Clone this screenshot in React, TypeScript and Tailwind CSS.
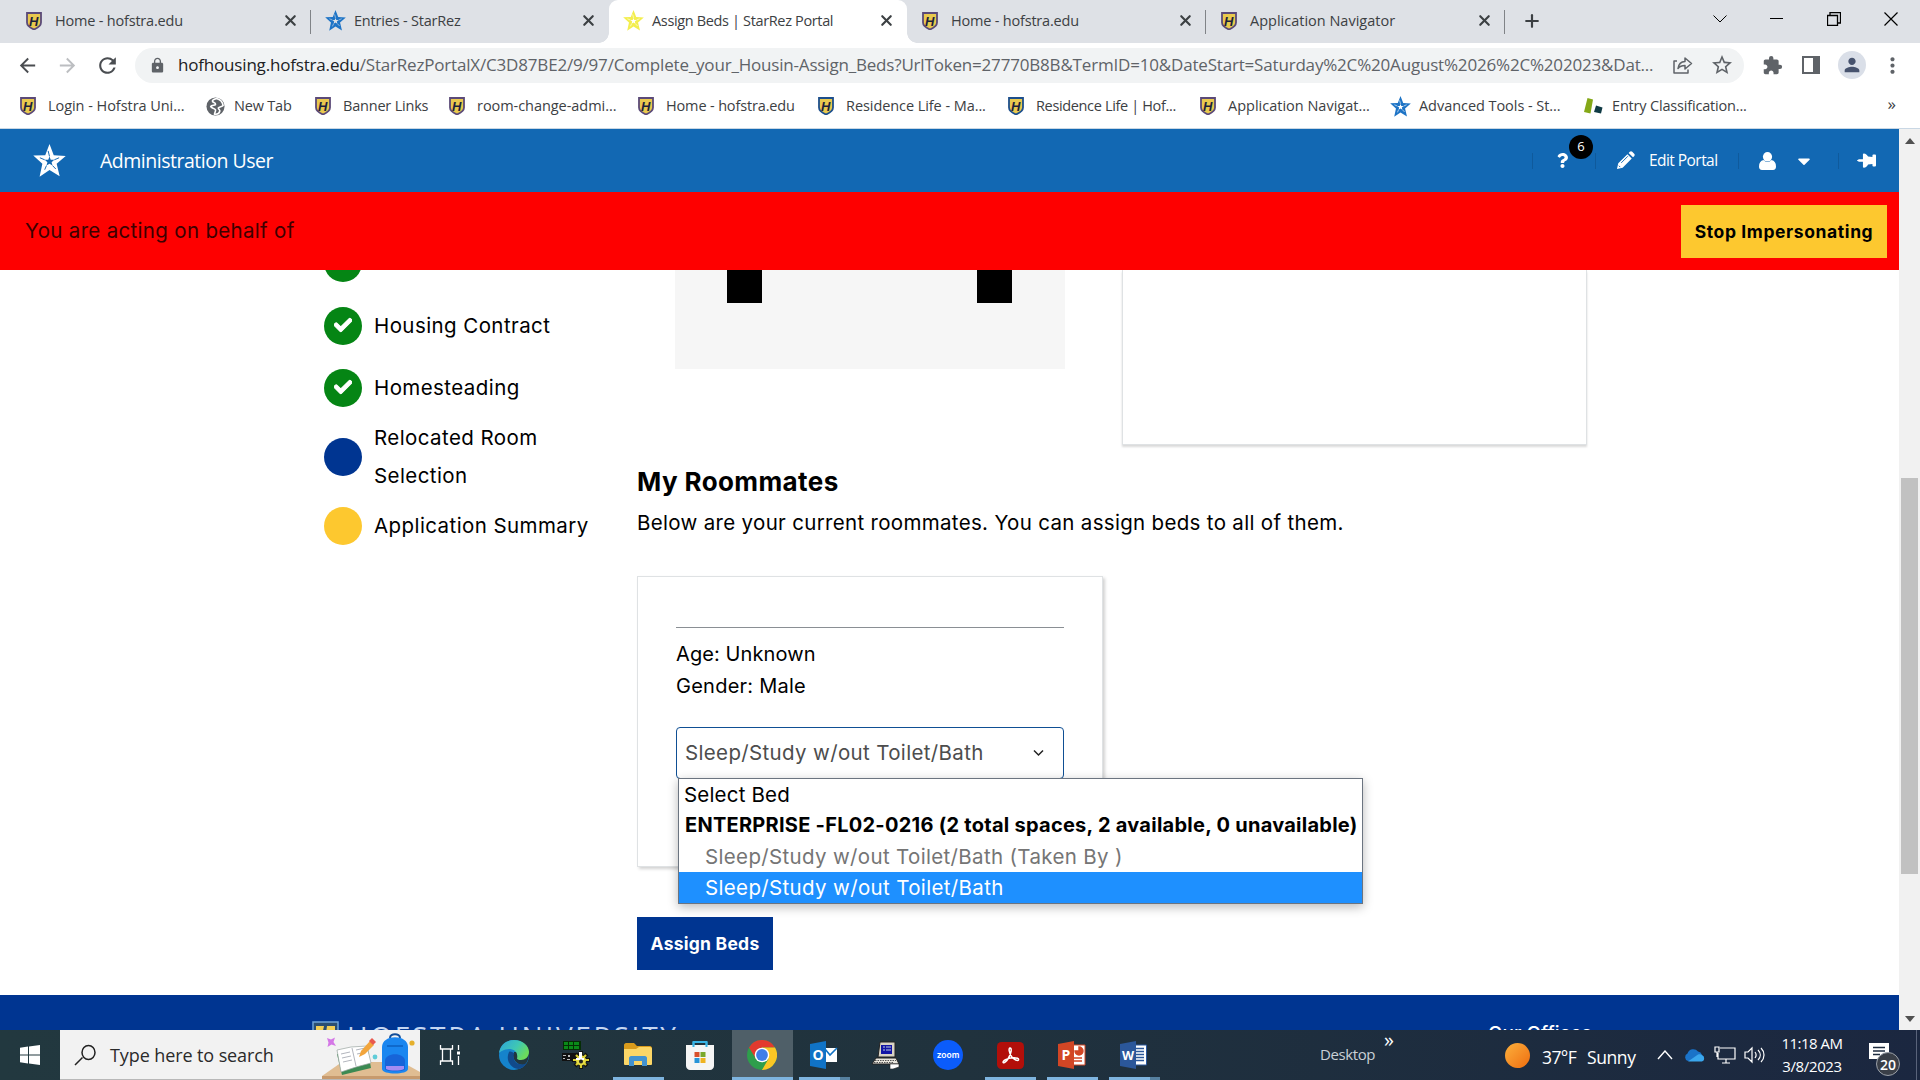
import React from 'react';
import { clsx } from 'clsx';
import { FaCaretDown, FaCheck, FaQuestion, FaThumbtack } from 'react-icons/fa';
import { MdArrowBack, MdArrowForward, MdExtension, MdLock, MdMoreVert, MdPerson, MdRefresh, MdStarOutline } from 'react-icons/md';
import { X, Plus } from 'lucide-react';

interface IconProps {
  className?: string;
}

/* ---------- Logos ---------- */

const Shield: React.FC<IconProps & { edge?: string }> = ({ className, edge = '#5b4a78' }) => (
  <svg viewBox="0 0 16 18" className={clsx('h-[18px] w-4 shrink-0', className)}>
    <path d="M1 1h14v9.500c0 3.500-3.500 5.500-7 7-3.500-1.500-7-3.500-7-7z" fill="#e9c94e" stroke={edge} strokeWidth="1.800" />
    <text x="7.800" y="13.500" textAnchor="middle" fontFamily="Liberation Sans" fontSize="13" fontWeight="700" fontStyle="italic" fill="#1d1f3c">H</text>
  </svg>
);

const StarLogo: React.FC<IconProps & { slit?: string }> = ({ className, slit = '#fff' }) => (
  <svg viewBox="0 0 24 24" className={clsx('shrink-0', className)}>
    <path
      fill="currentColor"
      fillRule="evenodd"
      d="M12 0l3.100 8.100 8.700.6-6.600 5.700 2.200 9.100-7.400-4.600-7.200 4.900 2-9.400L.2 8.400l8.700-.3zM12 9l-.9 2.400-2.600.1 2 1.700-.7 2.500 2.200-1.400 2.200 1.400-.7-2.500 2-1.700-2.600-.1z"
    />
    <path d="M12 9L11 5M15.500 11.500l3.500-1.500M14.200 15.700l2.400 2.500M9.800 15.700l-1.300 3M8.500 11.500L5 10" stroke={slit} strokeWidth=".7" fill="none" />
  </svg>
);

const Globe = () => (
  <svg viewBox="0 0 20 20" className="size-[19px]">
    <circle cx="10" cy="10" r="9.500" fill="#5f6368" />
    <path d="M11 1.500c-3 1-5 2-4 3.500 1.500 1 3.500 1 3 3-1 1-4 .5-5 2 .5 2 4 1.500 5 3.500.5 1.500-1 3-1 4.500 3 .5 5-1 5.500-3 .5-1.500-1.500-2-1.500-3.500 1-1.500 4-1 5-2.500C17.500 5 15 2.500 11 1.500z" fill="none" stroke="#fff" strokeWidth="1.700" />
  </svg>
);

const GreenBlocks = () => (
  <svg viewBox="0 0 19 18" className="h-[18px] w-[19px]">
    <path d="M3.500 1l5.500 1.500-2.500 14L0 15z" fill="#84a817" />
    <path d="M12 8.500l6.500 2-1.500 6-7-1.500z" fill="#0f3a44" />
  </svg>
);

/* ---------- Browser chrome ---------- */

interface TabProps {
  icon: React.ReactNode;
  title: string;
  width: string;
  text?: string;
  active?: boolean;
  divider?: boolean;
}

const Tab: React.FC<TabProps> = ({ icon, title, width, text, active, divider }) => (
  <div className={clsx('relative flex h-[43px] shrink-0 items-center pr-[12px] pb-[2px]', width, active && 'rounded-t-[9px] bg-white')}>
    {active && (
      <>
        <span className="absolute bottom-0 -left-2.5 size-2.5 bg-[radial-gradient(circle_at_0_0,#dee1e6_9.5px,#fff_10px)]" />
        <span className="absolute -right-2.5 bottom-0 size-2.5 bg-[radial-gradient(circle_at_100%_0,#dee1e6_9.5px,#fff_10px)]" />
      </>
    )}
    <span className="flex w-[29px] shrink-0 items-center">{icon}</span>
    <span className={clsx('flex-1 text-[14.5px] whitespace-nowrap text-[#3c4043]', text)}>{title}</span>
    <X className="size-[17px] text-[#3c4043]" strokeWidth={3} />
    {divider && <span className="absolute top-[10px] right-0 h-6 w-px bg-[#808387]" />}
  </div>
);

const TabStrip = () => (
  <div className="flex h-[43px] bg-[#dee1e6]">
    <Tab icon={<Shield />} title="Home - hofstra.edu" width="w-[311px] pl-[26px]" text="tracking-[-0.2px]" divider />
    <Tab icon={<StarLogo className="size-[21px] text-[#1e74c6]" slit="#dee1e6" />} title="Entries - StarRez" width="w-[298px] pl-[14px]" text="tracking-[-0.2px]" />
    <Tab icon={<StarLogo className="size-[21px] text-[#f3ee4e]" />} title="Assign Beds | StarRez Portal" width="w-[298px] pl-[14px]" text="tracking-[-0.35px]" active />
    <Tab icon={<Shield />} title="Home - hofstra.edu" width="w-[299px] pl-[15px]" text="tracking-[-0.2px]" divider />
    <Tab icon={<Shield />} title="Application Navigator" width="w-[299px] pl-[15px]" divider />
    <div className="flex w-[53px] items-center justify-center pb-[2px]">
      <Plus className="size-[20px] text-[#3c4043]" strokeWidth={2.6} />
    </div>
    <div className="ml-auto flex h-[37px] items-center pr-px text-black">
      <span className="flex w-[57px] justify-center">
        <svg viewBox="0 0 14 8" className="h-2 w-3.5"><path d="M.5.500l6.500 6.500 6.500-6.500" fill="none" stroke="currentColor" /></svg>
      </span>
      <span className="flex w-[57px] justify-center"><span className="h-px w-[13px] bg-black" /></span>
      <span className="flex w-[57px] justify-center">
        <svg viewBox="0 0 14 14" className="size-3.5"><path d="M.5 3.500h10v10h-10zM3 3V.500h10.500V11H11" fill="none" stroke="currentColor" strokeWidth="1.3" /></svg>
      </span>
      <span className="flex w-[57px] justify-center">
        <svg viewBox="0 0 14 14" className="size-3.5"><path d="M.5.500l13 13M13.500.500l-13 13" fill="none" stroke="currentColor" strokeWidth="1.2" /></svg>
      </span>
    </div>
  </div>
);

const AddressBar = () => (
  <div className="flex h-[43px] items-center bg-white pt-px text-[#5f6368]">
    <span className="flex w-12 justify-end pr-[9px]"><MdArrowBack className="size-[23px] text-[#4a4d51]" /></span>
    <span className="flex w-10 justify-end pr-[9px]"><MdArrowForward className="size-[23px] text-[#bcbec1]" /></span>
    <span className="flex w-[47px] pl-[7px]"><MdRefresh className="size-[25px] text-[#4a4d51]" /></span>
    <div className="flex h-[35px] w-[1609px] items-center rounded-full bg-[#f1f3f4] pr-[10px] pl-[14px]">
      <MdLock className="mr-[12px] size-[17px] shrink-0" />
      <span className="flex-1 text-[17px] tracking-[-0.183px] whitespace-nowrap">
        <span className="text-[#202124]">hofhousing.hofstra.edu</span>/StarRezPortalX/C3D87BE2/9/97/Complete_your_Housin-Assign_Beds?UrlToken=27770B8B&amp;TermID=10&amp;DateStart=Saturday%2C%20August%2026%2C%202023&amp;Dat...
      </span>
      <svg viewBox="0 0 20 18" className="mr-[17px] h-[18px] w-5 shrink-0">
        <path d="M4 5H1v12h14v-3.500M5 12.500c.6-4.500 3.200-6.800 7-7V2l6.500 5.500L12 13V9.500c-3.200 0-5.300.8-7 3z" fill="none" stroke="currentColor" strokeWidth="1.5" strokeLinejoin="round" />
      </svg>
      <MdStarOutline className="size-[24px] shrink-0" />
    </div>
    <MdExtension className="ml-[18px] size-[21px]" />
    <span className="ml-[19px] h-[18px] w-[18px] border-2 border-r-[7px] border-[#5f6368]" />
    <span className="ml-[18px] flex size-7 items-center justify-center rounded-full bg-[#dadfe8]">
      <MdPerson className="size-[22px] text-[#47536e]" />
    </span>
    <MdMoreVert className="ml-[14px] size-[25px]" />
  </div>
);

const bookmarks = [
  { title: 'Login - Hofstra Uni...', width: 'w-[186px]', icon: <Shield />, text: 'tracking-[-0.05px]' },
  { title: 'New Tab', width: 'w-[109px]', icon: <Globe />, text: 'tracking-[-0.2px]' },
  { title: 'Banner Links', width: 'w-[134px]', icon: <Shield />, text: 'tracking-[-0.2px]' },
  { title: 'room-change-admi...', width: 'w-[189px]', icon: <Shield />, text: 'tracking-[-0.05px]' },
  { title: 'Home - hofstra.edu', width: 'w-[180px]', icon: <Shield />, text: 'tracking-[-0.15px]' },
  { title: 'Residence Life - Ma...', width: 'w-[190px]', icon: <Shield edge="#1d4f8c" />, text: 'tracking-[-0.07px]' },
  { title: 'Residence Life | Hof...', width: 'w-[192px]', icon: <Shield edge="#1d4f8c" />, text: 'tracking-[-0.35px]' },
  { title: 'Application Navigat...', width: 'w-[191px]', icon: <Shield />, text: '' },
  { title: 'Advanced Tools - St...', width: 'w-[193px]', icon: <StarLogo className="-ml-px size-[21px] text-[#1e74c6]" />, text: 'tracking-[-0.05px]' },
  { title: 'Entry Classification...', width: 'w-[190px]', icon: <GreenBlocks />, text: 'tracking-[-0.18px]' },
];

const BookmarkBar = () => (
  <div className="flex h-[43px] items-center border-b border-[#c9d7e4] bg-white pb-[2px] pl-[20px] text-[14.5px] text-[#3c4043]">
    {bookmarks.map((b) => (
      <div key={b.title} className={clsx('flex shrink-0 items-center', b.width)}>
        <span className="flex w-[28px] shrink-0 items-center">{b.icon}</span>
        <span className={clsx('whitespace-nowrap', b.text)}>{b.title}</span>
      </div>
    ))}
    <span className="mr-[24px] ml-auto pb-1 text-[17px]">»</span>
  </div>
);

/* ---------- Portal ---------- */

const AdminBar = () => (
  <div className="flex h-[63px] items-center bg-[#1268b3] pl-[33px] text-white">
    <StarLogo className="size-[33px]" slit="#1268b3" />
    <span className="ml-[34px] flex-1 pt-px text-[19.5px] tracking-[-0.49px]">Administration User</span>
    <div className="flex h-4 items-center border-l border-[#0f5a9c]">
      <div className="relative flex w-[62px] justify-center pr-[3px]">
        <FaQuestion className="size-[15px]" />
        <span className="absolute -top-[18px] left-[36px] flex size-6 items-center justify-center rounded-full bg-black text-[13px]">6</span>
      </div>
    </div>
    <div className="flex h-4 w-[143px] items-center border-l border-[#0f5a9c] pl-[20px]">
      <svg viewBox="0 0 20 20" className="size-[19px] shrink-0">
        <path d="M1 19l1.400-6L12 3.400l4.600 4.600L7 17.600zM13.300 2.100l1.200-1.200c.8-.8 1.800-.8 2.600 0l2 2c.8.8.8 1.800 0 2.600l-1.200 1.200z" fill="currentColor" />
        <path d="M5.500 12.500l7-7M3 15.500l1.500 1.500" stroke="#1268b3" strokeWidth="1" />
      </svg>
      <span className="ml-[14px] text-[15.5px] tracking-[-0.55px] whitespace-nowrap">Edit Portal</span>
    </div>
    <div className="flex h-4 w-[100px] items-center border-l border-[#0f5a9c] pl-[20px]">
      <svg viewBox="0 0 17 18" className="h-[18px] w-[17px]">
        <ellipse cx="8.500" cy="4.800" rx="4.600" ry="4.800" fill="currentColor" />
        <path d="M4.500 8c2 2.500 6 2.500 8 0 3 .5 4.500 3 4.500 6.500 0 2-1 3.500-3 3.500H3c-2 0-3-1.500-3-3.500C0 11 1.500 8.500 4.500 8z" fill="currentColor" />
      </svg>
      <FaCaretDown className="ml-[18px] size-[20px]" />
    </div>
    <div className="flex h-4 w-[61px] items-center border-l border-[#0f5a9c] pl-[18px]">
      <FaThumbtack className="size-[19px] rotate-90" />
    </div>
  </div>
);

const ImpersonationBanner = () => (
  <div className="flex h-[78px] items-center justify-between bg-[#fe0000] pr-[12px] pl-[25px] font-['Inter',sans-serif]">
    <span className="text-[20.5px] tracking-[0.32px] text-[#3d0000]">You are acting on behalf of</span>
    <button className="h-[53px] w-[206px] bg-[#fdc82f] pt-[2px] text-[17.5px] font-bold tracking-[0.6px] text-black">Stop Impersonating</button>
  </div>
);

const steps = [
  { label: '', color: 'bg-[#058514]', margin: '-mt-[26px]', done: true },
  { label: 'Housing Contract', color: 'bg-[#058514]', margin: 'mt-[25px]', done: true },
  { label: 'Homesteading', color: 'bg-[#058514]', margin: 'mt-[24px]', done: true },
  { label: 'Relocated Room Selection', color: 'bg-[#003591]', margin: 'mt-[12px]', done: false },
  { label: 'Application Summary', color: 'bg-[#fdc82f]', margin: 'mt-[12px]', done: false },
];

const Steps = () => (
  <ul className="w-[313px] shrink-0">
    {steps.map((s) => (
      <li key={s.label} className={clsx('flex items-center', s.margin)}>
        <span className={clsx('flex size-[38px] shrink-0 items-center justify-center rounded-full', s.color)}>
          {s.done && <FaCheck className="mb-[2px] size-[18px] stroke-white stroke-[30px] text-white" />}
        </span>
        <span className="ml-[12px] w-[225px] text-[20.5px] leading-[38px] tracking-[0.42px]">{s.label}</span>
      </li>
    ))}
  </ul>
);

const BedSelect = () => (
  <div className="relative mt-[25px] text-[20.5px]">
    <div className="flex h-[52px] items-center justify-between rounded-[4px] border border-[#0f4f94] bg-white pr-[18px] pl-[8px] text-[#4d4d4d]">
      <span className="tracking-[0.35px] whitespace-nowrap">Sleep/Study w/out Toilet/Bath</span>
      <svg viewBox="0 0 12 8" className="h-2 w-[13px]"><path d="M1.500 1.500L6 6l4.500-4.500" fill="none" stroke="#222" strokeWidth="1.500" /></svg>
    </div>
    {/* Options */}
    <ul className="absolute top-[51px] left-[2px] w-[685px] border border-[#6b7480] bg-white leading-[31px] whitespace-nowrap shadow-[0_3px_10px_rgba(0,0,0,0.28)]">
      <li className="pl-[5px] tracking-[0.18px]">Select Bed</li>
      <li className="pl-[6px] text-[20px] font-bold tracking-[0.26px]">ENTERPRISE -FL02-0216 (2 total spaces, 2 available, 0 unavailable)</li>
      <li className="pl-[26px] tracking-[0.34px] text-[#757575]">Sleep/Study w/out Toilet/Bath (Taken By )</li>
      <li className="bg-[#1e90ff] pl-[26px] tracking-[0.35px] text-white">Sleep/Study w/out Toilet/Bath</li>
    </ul>
  </div>
);

const Content = () => (
  <main className="w-[1262px]">
    <div className="flex h-[175px]">
      <div className="ml-[38px] flex h-[99px] w-[390px] gap-[215px] bg-[#f6f6f6] pl-[52px]">
        <span className="h-[33px] w-[35px] bg-black" />
        <span className="h-[33px] w-[35px] bg-black" />
      </div>
      <div className="ml-[57px] w-[465px] border border-t-0 border-[#dfe2e4] shadow-[0_2px_2px_rgba(0,0,0,0.15)]" />
    </div>
    <h2 className="mt-[18px] text-[26px] leading-[38px] font-bold tracking-[0.4px]">My Roommates</h2>
    <p className="mt-[6px] text-[20.5px] leading-8 tracking-[0.32px]">Below are your current roommates. You can assign beds to all of them.</p>
    <div className="mt-[37px] h-[291px] w-[466px] border border-[#dfe2e4] px-[38px] pt-[50px] shadow-[2px_2px_3px_rgba(0,0,0,0.18)]">
      <hr className="border-[#8a8f94]" />
      <div className="mt-[10px] text-[20px] leading-8">
        <p className="tracking-[0.1px]">Age: Unknown</p>
        <p className="tracking-[0.25px]">Gender: Male</p>
      </div>
      <BedSelect />
    </div>
    <button className="mt-[50px] h-[53px] w-[136px] bg-[#003591] pt-[2px] text-[17.5px] font-bold tracking-[0.25px] text-white">Assign Beds</button>
  </main>
);

const Footer = () => (
  <footer className="flex h-[35px] shrink-0 items-start overflow-hidden bg-[#003591] text-white">
    <svg viewBox="0 0 27 30" className="mt-[26px] ml-[312px] h-[30px] w-[27px]">
      <path d="M1 1h25v17c0 6-6 9-12.500 11C7 27 1 24 1 18z" fill="#2b4f72" stroke="#6ea3d8" strokeWidth="1.500" />
      <path d="M4 5h8l-3 14H4zM15 5h8v14h-10z" fill="#f4cf55" />
    </svg>
    <span className="mt-[25px] ml-[8px] w-[334px] text-[28px] leading-8 tracking-[2.7px] whitespace-nowrap text-[#c4d5f0]">HOFSTRA UNIVERSITY</span>
    <span className="mt-[27px] ml-[807px] font-['Inter',sans-serif] text-[19px] leading-6 font-medium whitespace-nowrap">Our Offices</span>
  </footer>
);

const Scrollbar = () => (
  <div className="flex w-[21px] flex-col items-center bg-[#f1f1f1]">
    <svg viewBox="0 0 10 6" className="mt-[9px] h-[6px] w-[10px]"><path d="M0 6l5-6 5 6z" fill="#505050" /></svg>
    <div className="mt-[334px] h-[396px] w-[17px] bg-[#c1c1c1]" />
    <svg viewBox="0 0 10 6" className="mt-auto mb-[8px] h-[6px] w-[10px]"><path d="M0 0l5 6 5-6z" fill="#505050" /></svg>
  </div>
);

/* ---------- Taskbar ---------- */

const SearchArt = () => (
  <svg viewBox="0 0 100 49" className="ml-auto h-[49px] w-[100px]">
    <path d="M2 49V46l20-14h60l18 10v7z" fill="#e0bd92" />
    <path d="M2 46h98v3H2z" fill="#c79a6d" />
    <path d="M7 8l4 1.500 4-2-1.500 4.500 2.500 4-4.500-1.500-4 2.500 1-4.500z" fill="#d477e6" />
    <path d="M17 24l5 21 29-7-3-18z" fill="#3c8a52" />
    <path d="M17 20l14-3 16-1 4 17-15 4-15 5z" fill="#fff" stroke="#9aa5a0" strokeWidth=".7" />
    <path d="M32 18l4 18M21 24l9-2M22 28l9-2M23 32l9-2M36 20l9-2M37 24l9-2" stroke="#a9adb5" strokeWidth=".9" />
    <path d="M39 27l2-6 9-10 4 4-9 9z" fill="#f2a53c" />
    <path d="M49 11l3-3 4 4-3 3z" fill="#e9594f" />
    <circle cx="55" cy="27" r="2.400" fill="#60ccd8" />
    <circle cx="92" cy="13" r="2.600" fill="#e5b02c" />
    <path d="M70 8c0-5 10-5 10 0" fill="none" stroke="#124d99" strokeWidth="2" />
    <path d="M62 17c0-13 26-13 26 0v22c0 6-26 6-26 0z" fill="#1a86f0" />
    <path d="M65 31c0-9 20-9 20 0v8c0 3-20 3-20 0z" fill="#1764d8" />
    <path d="M66 36h18v3c-4 2-14 2-18 0z" fill="#a48cf2" />
    <path d="M67 16h16" stroke="#0d5fc0" strokeWidth="1.500" />
  </svg>
);

const TaskViewIcon = () => (
  <svg viewBox="0 0 22 20" className="h-5 w-[22px]">
    <path d="M1.500 0v4h12V0M1.500 20v-4h12v4M3.500 4v12M11.500 4v12M19.500 0v5M19.500 11v9" fill="none" stroke="#fff" strokeWidth="1.300" />
    <path d="M18 6.500h3v3h-3z" fill="#fff" />
  </svg>
);

const EdgeIcon = () => (
  <svg viewBox="0 0 30 30" className="size-[30px]">
    <defs>
      <linearGradient id="edgeTop" x1="0" y1="0" x2="1" y2=".5">
        <stop offset="0" stopColor="#2ba3dd" />
        <stop offset=".6" stopColor="#3fc7b4" />
        <stop offset="1" stopColor="#6bdc5c" />
      </linearGradient>
    </defs>
    <circle cx="15" cy="15" r="15" fill="#1583cc" />
    <path d="M15 12h15c0 9-3 12-5 13-3 0-8-1-10-6z" fill="#22363e" />
    <path d="M0 13C1 5 7 0 15 0c9 0 15 6 15 12 0 5-4 8-8 8-3 0-5-1-4-3 1-5-3-8-8-8-5 0-9 3-10 4z" fill="url(#edgeTop)" />
    <path d="M10 12c-4 8 2 17 10 17 3-1 6-3 8-6-5 3-12 1-13-4-.500-3 0-4 1-5-2-2-5-3-6-2z" fill="#114a8b" />
    <path d="M16 13c-2 2-1.500 5 0 6.500 2 1 3 .5 2-1 .8-2 0-4.500-2-5.500z" fill="#22363e" />
  </svg>
);

const GearAppIcon = () => (
  <svg viewBox="0 0 28 28" className="size-7">
    <path d="M1 0h18v9H1z" fill="#052d05" />
    <path d="M2 1h4v3H2zM7 1h4v3H7zM12 1h5v3h-5zM2 5h4v3H2zM7 5h4v3H7zM12 5h5v3h-5z" fill="#0a8a19" />
    <path d="M0 12h19v8H0z" fill="#111" />
    <path d="M1 14h3v1H1zM6 14h2v2H6zM1 17h2v1H1zM5 18h3v1H5z" fill="#bbb" />
    <path d="M19 10v18M10 19h18M13 13l12 12M25 13L13 25" stroke="#111" strokeWidth="4" />
    <path d="M19 11v16M11 19h16M14 14l10 10M24 14L14 24" stroke="#d8cf31" strokeWidth="2.200" />
    <circle cx="19" cy="19.500" r="5" fill="#e6dc45" />
    <path d="M17 11h3v6h-3zM14 17h8v2h-8z" fill="#fff" />
    <circle cx="19" cy="20.500" r="2" fill="#222" />
  </svg>
);

const FolderIcon = () => (
  <svg viewBox="0 0 28 24" className="h-6 w-7">
    <path d="M0 2c0-1 1-2 2-2h8l3 3h13c1 0 2 1 2 2v15H0z" fill="#d99b1c" />
    <path d="M0 6h12l3-2h11c1 0 2 1 2 2v15c0 1-1 1-2 1H2c-1 0-2 0-2-1z" fill="#fbd667" />
    <path d="M5 23v-8c0-1 1-2 2-2h14c1 0 2 1 2 2v8h-5v-5h-8v5z" fill="#4292d0" />
  </svg>
);

const StoreIcon = () => (
  <svg viewBox="0 0 30 30" className="size-[30px]">
    <path d="M8.500 8V2h13v6" fill="none" stroke="#39b4e6" strokeWidth="2" />
    <path d="M1 5h28v21c0 2-2 4-4 4H5c-2 0-4-2-4-4z" fill="#f5f5f5" />
    <path d="M8.500 2v5M21.500 2v5" stroke="#39b4e6" strokeWidth="2" />
    <path d="M9.500 12h5v5h-5z" fill="#d8502c" />
    <path d="M15.500 12h5v5h-5z" fill="#7aa82a" />
    <path d="M9.500 18h5v5h-5z" fill="#2694d8" />
    <path d="M15.500 18h5v5h-5z" fill="#efb321" />
  </svg>
);

const ChromeIcon = () => (
  <svg viewBox="0 0 30 30" className="size-[30px]">
    <circle cx="15" cy="15" r="15" fill="#2e9e4c" />
    <path d="M2 7.500A15 15 0 0 1 28 7.500H15L9 19z" fill="#e23a2e" />
    <path d="M28 7.500A15 15 0 0 1 15 30l6.500-11.200L15 7.500z" fill="#fbc624" />
    <circle cx="15" cy="15" r="7.300" fill="#fff" />
    <circle cx="15" cy="15" r="5.900" fill="#3f7ee8" />
  </svg>
);

const OutlookIcon = () => (
  <svg viewBox="0 0 28 28" className="size-7">
    <path d="M15 7h12v14H15z" fill="#fff" />
    <path d="M15 8l5 6 7-7" fill="none" stroke="#1172c4" strokeWidth="1.600" />
    <path d="M0 3l16-3v28L0 25z" fill="#1073c6" />
    <text x="8" y="19" textAnchor="middle" fontFamily="Open Sans" fontWeight="700" fontSize="14" fill="#fff">O</text>
  </svg>
);

const TerminalIcon = () => (
  <svg viewBox="0 0 30 28" className="h-7 w-[30px]">
    <path d="M9 1h15v15H7z" fill="#d8d3c4" stroke="#222" />
    <path d="M10 4h11v9H10z" fill="#1315a5" />
    <path d="M12 6h2M15 6h5M12 9h2M15 9h5" stroke="#bcd" strokeWidth="1.200" />
    <path d="M5 17h20l3 6H1z" fill="#e9e6dd" stroke="#222" />
    <path d="M4 19.500h21M3 21.500h19" stroke="#555" strokeDasharray="1.500 1" />
    <path d="M19 23h9v3l-6 2h-3z" fill="#fff" stroke="#222" strokeWidth=".6" />
  </svg>
);

const ZoomIcon = () => (
  <svg viewBox="0 0 30 30" className="size-[30px]">
    <circle cx="15" cy="15" r="15" fill="#0b5cfb" />
    <text x="15" y="17.500" textAnchor="middle" fontFamily="Inter" fontWeight="600" fontSize="8.500" fill="#fff">zoom</text>
  </svg>
);

const AcrobatIcon = () => (
  <svg viewBox="0 0 27 27" className="size-[27px]">
    <rect width="27" height="27" rx="4.500" fill="#b20f0a" />
    <path d="M13 6c2 0 1.500 5-1.500 10-2 3.500-4.500 5.500-5.300 4.500-1-1.500 4-4.500 9.800-4.700 4-.200 6 .6 5.500 2-.7 1.400-4.500 0-6.800-3C12 11 11.400 6 13 6z" fill="none" stroke="#fff" strokeWidth="1.500" />
  </svg>
);

const PowerPointIcon = () => (
  <svg viewBox="0 0 28 28" className="size-7">
    <path d="M14 4h13v20H14z" fill="#fff" stroke="#d24625" />
    <path d="M17 10a4 4 0 1 0 4-4v4zM16 17h8M16 20h8" fill="#d24625" stroke="#d24625" strokeWidth="1.400" />
    <path d="M0 3l16-3v28L0 25z" fill="#d24625" />
    <text x="8" y="19" textAnchor="middle" fontFamily="Open Sans" fontWeight="700" fontSize="14" fill="#fff">P</text>
  </svg>
);

const WordIcon = () => (
  <svg viewBox="0 0 28 28" className="size-7">
    <path d="M14 4h12.500v20H14z" fill="#fff" stroke="#2b579a" />
    <path d="M16 7.500h8M16 10.500h8M16 13.500h8M16 16.500h8M16 19.500h8" stroke="#2b579a" strokeWidth="1.400" />
    <path d="M0 3l16-3v28L0 25z" fill="#2b579a" />
    <text x="8" y="18.500" textAnchor="middle" fontFamily="Open Sans" fontWeight="700" fontSize="12.500" fill="#fff">W</text>
  </svg>
);

const apps = [
  { name: 'edge', icon: <EdgeIcon />, state: '' },
  { name: 'scheduler', icon: <GearAppIcon />, state: '' },
  { name: 'explorer', icon: <FolderIcon />, state: 'open' },
  { name: 'store', icon: <StoreIcon />, state: '' },
  { name: 'chrome', icon: <ChromeIcon />, state: 'active' },
  { name: 'outlook', icon: <OutlookIcon />, state: 'stack' },
  { name: 'terminal', icon: <TerminalIcon />, state: '' },
  { name: 'zoom', icon: <ZoomIcon />, state: '' },
  { name: 'acrobat', icon: <AcrobatIcon />, state: 'open' },
  { name: 'powerpoint', icon: <PowerPointIcon />, state: 'open' },
  { name: 'word', icon: <WordIcon />, state: 'stack' },
];

const Taskbar = () => (
  <div className="flex h-[50px] shrink-0 items-center bg-linear-to-r from-[#22383f] via-[#20323d] to-[#1b2740] text-white">
    <div className="flex w-[60px] justify-center">
      <svg viewBox="0 0 20 20" className="size-5"><path d="M0 2.800l8-1.200v8H0zM9 1.400L20 0v9.600H9zM0 10.500h8v8l-8-1.200zM9 10.500h11V20L9 18.600z" fill="#fff" /></svg>
    </div>
    <div className="flex h-[50px] w-[360px] items-center border-b border-[#b8b8b8] bg-[#f2f2f2] pl-[14px] text-[#2a2a2a]">
      <svg viewBox="0 0 22 22" className="size-[22px]"><path d="M8.500 13.500L1 21M8 8.500a6.500 7 0 1 0 13 0a6.500 7 0 1 0-13 0" fill="none" stroke="#222" strokeWidth="1.500" /></svg>
      <span className="ml-[14px] pt-px text-[18px] tracking-[-0.1px] whitespace-nowrap">Type here to search</span>
      <SearchArt />
    </div>
    <div className="flex w-[63px] justify-center pr-[3px]"><TaskViewIcon /></div>
    {apps.map((a) => (
      <div key={a.name} className="flex h-full w-[62px] justify-center">
        <div className={clsx('flex h-full flex-col items-center', a.state === 'active' ? 'w-[61px] bg-[#4f5f68]' : 'w-[51px]')}>
          <div className="flex flex-1 items-center pt-[3px]">{a.icon}</div>
          <div className={clsx('flex h-[3px] w-full', a.state && 'bg-[#7eb4df]')}>
            {a.state === 'stack' && <span className="ml-auto w-[10px] bg-[#56809f]" />}
          </div>
        </div>
      </div>
    ))}
    <span className="ml-[155px] w-[62px] pb-px text-[15px] tracking-[-0.4px] text-[#c9d0d6]">Desktop</span>
    <span className="mb-[30px] ml-[2px] w-[12px] text-[20px] leading-5">»</span>
    <span className="ml-[109px] size-[25px] rounded-full bg-linear-to-br from-[#fbb03b] to-[#ee6c0a]" />
    <span className="ml-[12px] w-[45px] pt-[4px] text-[17.5px] tracking-[-0.6px]">37°F</span>
    <span className="w-[70px] pt-[4px] text-[17.5px] tracking-[-0.4px]">Sunny</span>
    <svg viewBox="0 0 16 10" className="h-[10px] w-4"><path d="M1 9l7-8 7 8" fill="none" stroke="#fff" strokeWidth="1.400" /></svg>
    <svg viewBox="0 0 21 14" className="ml-[11px] h-[14px] w-[21px]">
      <path d="M4 13a4 4 0 0 1-.500-7.500A6 6 0 0 1 14 3.500 5 5 0 0 1 18 7a3.200 3.200 0 0 1 0 6z" fill="#1a73c9" />
      <path d="M4 13.500l10-7c3-1 4 .5 4 .8a3.300 3.300 0 0 1 0 6.200z" fill="#3aa7ee" />
    </svg>
    <svg viewBox="0 0 22 18" className="ml-[9px] h-[18px] w-[22px]">
      <path d="M6 2h15v11H4V7M12 13v4M8 17h8M1 1h4v5H1zM3 6v5" fill="none" stroke="#fff" strokeWidth="1.200" />
    </svg>
    <svg viewBox="0 0 22 18" className="ml-[8px] h-[18px] w-[22px]">
      <path d="M1 6h3l4-4v14l-4-4H1zM11 6c1.500 2 1.500 4 0 6M14 4c3 3 3 7 0 10M17 2c4 4 4 10 0 14" fill="none" stroke="#fff" strokeWidth="1.200" />
    </svg>
    <div className="ml-[11px] w-[70px] text-center text-[15px] leading-[23px] whitespace-nowrap">
      <p className="tracking-[-0.5px]">11:18 AM</p>
      <p className="tracking-[-0.35px]">3/8/2023</p>
    </div>
    <div className="relative ml-[22px] w-[47px]">
      <svg viewBox="0 0 20 20" className="mb-[4px] size-5">
        <path d="M0 0h20v16h-8l-4 4v-4H0z" fill="#fff" />
        <path d="M4 4.500h12M4 8h12M4 11.500h7" stroke="#1e2c40" strokeWidth="1.400" />
      </svg>
      <span className="absolute top-[9px] left-[7px] flex size-6 items-center justify-center rounded-full border border-[#9aa0a8] bg-[#3a3f48] text-[14px] font-semibold">20</span>
    </div>
    <span className="h-full w-px bg-[#59637a]" />
  </div>
);

export default function App() {
  return (
    <div className="flex h-[1080px] w-[1920px] flex-col overflow-hidden bg-white font-['Open_Sans',sans-serif] text-black">
      <TabStrip />
      <AddressBar />
      <BookmarkBar />
      <div className="flex h-[901px] shrink-0">
        <div className="flex w-[1899px] flex-col">
          <AdminBar />
          <ImpersonationBanner />
          <div className="flex h-[725px] overflow-hidden pl-[324px] font-['Inter',sans-serif]">
            <Steps />
            <Content />
          </div>
          <Footer />
        </div>
        <Scrollbar />
      </div>
      <Taskbar />
    </div>
  );
}
